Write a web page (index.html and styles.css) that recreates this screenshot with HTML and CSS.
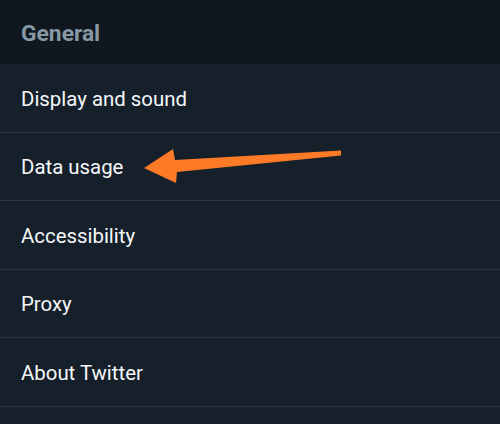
FILE: index.html
```html
<!DOCTYPE html>
<html lang="en">

<head>
    <meta charset="UTF-8">
    <meta name="viewport" content="width=device-width, initial-scale=1.0">
    <title>Settings</title>
    <link rel="stylesheet" href="styles.css">
</head>

<body>
    <div class="settings">
        <div class="section-title">General</div>
        <ul class="menu">
            <li class="menu-item">Display and sound</li>
            <li class="menu-item">Data usage</li>
            <li class="menu-item">Accessibility</li>
            <li class="menu-item">Proxy</li>
            <li class="menu-item">About Twitter</li>
            <li class="menu-item"></li>
        </ul>

        <!-- annotation arrow pointing at Data usage -->
        <svg class="arrow" width="500" height="424" viewBox="0 0 500 424">
            <polygon points="144,168 173,149 175,160 341,150.5 341,155.5 177,172 176,183" fill="#fd7a26" />
        </svg>
    </div>
</body>

</html>
```

FILE: styles.css
```css
body {
    margin: 0;
    padding: 0;
    background-color: #15202b;
    font-family: Roboto, "Noto Sans", sans-serif;
}

.settings {
    position: relative;
    width: 500px;
    height: 424px;
    overflow: hidden;
}

.section-title {
    height: 64px;
    box-sizing: border-box;
    padding: 2px 21px 0;
    display: flex;
    align-items: center;
    background-color: #10171e;
    color: #8899a6;
    font-size: 22.8px;
    font-weight: bold;
}

.menu {
    list-style: none;
    margin: 0;
    padding: 0;
}

.menu-item {
    height: 68.5px;
    box-sizing: border-box;
    padding: 2px 21px 0;
    display: flex;
    align-items: center;
    border-bottom: 1px solid #2a3540;
    color: #f5f8fa;
    font-size: 20.4px;
}

.arrow {
    position: absolute;
    top: 0;
    left: 0;
}
```
